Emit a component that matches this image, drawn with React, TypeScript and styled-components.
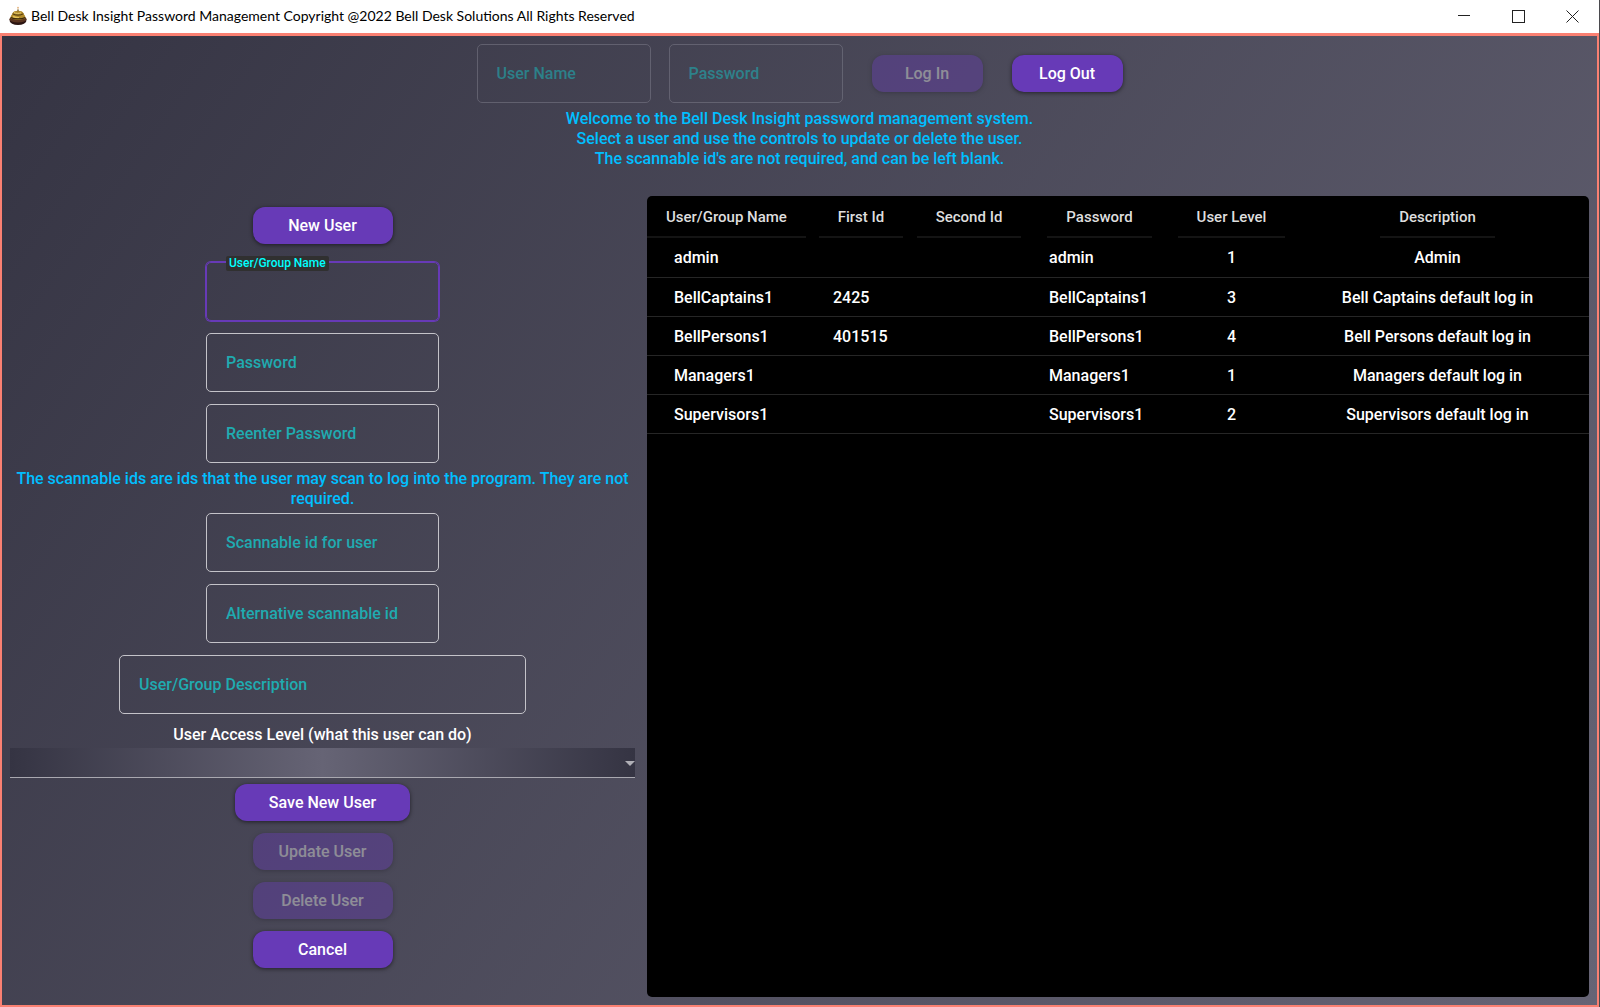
import React, { useState } from "react";
import styled, { createGlobalStyle, css } from "styled-components";

const GlobalStyle = createGlobalStyle`
  *, *::before, *::after { box-sizing: border-box; }
  body {
    margin: 0;
    font-family: Roboto, "Liberation Sans", sans-serif;
    font-size: 16px;
    font-weight: 500;
    line-height: 20px;
    color: #ffffff;
  }
  button, input, select { font: inherit; color: inherit; }
`;

const Window = styled.div`
  min-height: 100vh;
  display: flex;
  flex-direction: column;
  background: #ffffff;
  border-right: 1px solid #4a4a4e;
`;

const TitleBar = styled.header`
  height: 33px;
  display: flex;
  align-items: center;
  padding: 0 0 1px 8px;
  color: #000000;
`;

const Title = styled.h1`
  flex: 1;
  margin: 0 0 0 3px;
  font: 400 14px/20px Lato, "Open Sans", sans-serif;
`;

const Caption = styled.button`
  width: 54px;
  height: 32px;
  padding: 0;
  border: 0;
  background: none;
  display: grid;
  place-items: center;
`;

const Client = styled.main`
  flex: 1;
  display: flex;
  flex-direction: column;
  border: 2px solid #fa8072;
  border-top-width: 3px;
  background: linear-gradient(125deg, #353443, #666475);
`;

const LoginBar = styled.form`
  display: flex;
  justify-content: center;
  align-items: center;
  gap: 29px;
  padding-top: 8px;
`;

const Credentials = styled.div`
  display: flex;
  gap: 18px;
`;

const Notice = styled.p`
  margin: 6px 0 4px;
  color: #00bfff;
  text-align: center;
  white-space: pre-line;
`;

const FieldBox = styled.div<{ $width: number; $disabled?: boolean }>`
  position: relative;
  width: ${(p) => p.$width}px;
  height: 59px;
  display: grid;
  align-items: center;
  opacity: ${(p) => (p.$disabled ? 0.6 : 1)};
`;

const FieldInput = styled.input<{ $active: boolean }>`
  grid-area: 1 / 1;
  width: 100%;
  height: 100%;
  padding: 0 19px;
  border: 1px solid ${(p) => (p.disabled ? "#777684" : "#c4c3c9")};
  border-radius: 5px;
  background: transparent;
  outline: none;
  ${(p) =>
    p.$active &&
    css`
      border-color: #673ab7;
      box-shadow: 0 0 0 1px #673ab7;
    `}
`;

const FieldLabel = styled.label<{ $floating: boolean }>`
  grid-area: 1 / 1;
  margin-left: 20px;
  color: #1fabb0;
  pointer-events: none;
  ${(p) =>
    p.$floating &&
    css`
      position: absolute;
      top: -6px;
      padding: 0 3px;
      border-radius: 2px;
      background: #303030;
      color: #00ffff;
      font-size: 12px;
      line-height: 15px;
    `}
`;

const PushButton = styled.button<{ $width: number }>`
  width: ${(p) => p.$width}px;
  height: 37px;
  padding: 0;
  border: 0;
  border-radius: 12px;
  background: #673ab7;
  color: #ffffff;
  box-shadow: 0 1px 4px rgba(0, 0, 0, 0.55);
  &:disabled { opacity: 0.38; }
`;

const Columns = styled.div`
  flex: 1;
  display: grid;
  grid-template-columns: minmax(0, 2fr) minmax(0, 3fr);
  margin-top: 23px;
`;

const Editor = styled.form`
  display: flex;
  flex-direction: column;
  align-items: center;
  padding: 11px 5px 8px 8px;
`;

const FieldStack = styled.div`
  display: flex;
  flex-direction: column;
  align-items: center;
  gap: 12px;
`;

const FirstStack = styled(FieldStack)`
  margin-top: 18px;
`;

const LevelLabel = styled.label`
  margin: 11px 0 3px;
`;

const LevelBox = styled.div`
  align-self: stretch;
  display: grid;
  align-items: center;
  justify-items: end;
  margin-bottom: 6px;
`;

const LevelSelect = styled.select`
  grid-area: 1 / 1;
  width: 100%;
  height: 30px;
  padding: 0 12px;
  appearance: none;
  border: 0;
  border-bottom: 1px solid #a9a8b0;
  border-radius: 0;
  background: linear-gradient(90deg, #353443, #666475 50%, #353443);
`;

const LevelArrow = styled.svg`
  grid-area: 1 / 1;
  pointer-events: none;
`;

const ListPanel = styled.section`
  margin: 0 8px 8px 7px;
  border-radius: 5px;
  background: #000000;
  overflow: hidden;
`;

const UserTable = styled.table`
  width: 100%;
  table-layout: fixed;
  border-collapse: collapse;
`;

const Column = styled.col<{ $width?: number }>`
  width: ${(p) => (p.$width ? `${p.$width}px` : "auto")};
`;

const Heading = styled.th<{ $align?: string }>`
  height: 42px;
  padding: 0;
  vertical-align: top;
  font-size: 15px;
  font-weight: 500;
  color: #dedede;
  text-align: ${(p) => p.$align ?? "center"};
`;

const HeadingText = styled.span`
  display: inline-block;
  height: 42px;
  padding: 11px 19px 0;
  border-bottom: 2px solid #141414;
`;

const Row = styled.tr`
  border-bottom: 1px solid #262626;
`;

const Cell = styled.td<{ $align?: string; $indent?: number }>`
  height: 39px;
  padding: 2px 0 0 ${(p) => p.$indent ?? 0}px;
  text-align: ${(p) => p.$align ?? "left"};
`;

const DescriptionHeading = styled(Heading)`
  padding-right: 6px;
`;

const DescriptionCell = styled(Cell)`
  padding-right: 6px;
`;

type FieldProps = {
  id: string;
  label: string;
  width?: number;
  disabled?: boolean;
  type?: string;
  active: string;
  onActive: (id: string) => void;
};

function Field({ id, label, width = 233, disabled, type = "text", active, onActive }: FieldProps) {
  const [value, setValue] = useState("");
  const isActive = active === id;
  return (
    <FieldBox $width={width} $disabled={disabled}>
      <FieldInput
        id={id}
        type={type}
        value={value}
        disabled={disabled}
        autoComplete="off"
        $active={isActive}
        onChange={(e) => setValue(e.target.value)}
        onFocus={() => onActive(id)}
      />
      <FieldLabel htmlFor={id} $floating={isActive || value !== ""}>
        {label}
      </FieldLabel>
    </FieldBox>
  );
}

function BellIcon() {
  return (
    <svg width="20" height="20" viewBox="0 0 20 20" aria-hidden="true">
      <ellipse cx="10" cy="14.8" rx="8.400" ry="4.200" fill="#2c1512" />
      <ellipse cx="10" cy="13.200" rx="8.600" ry="3.400" fill="#5a3420" />
      <path d="M2.600 11.800C2.600 9.500 4 9 4.400 7.500C4.800 5.400 7.500 4.800 10 4.800S15.200 5.400 15.600 7.500C16 9 17.400 9.500 17.400 11.800C15.500 14.600 4.500 14.600 2.600 11.800Z" fill="#b18a2a" />
      <path d="M4.600 7.800C7.500 9.600 12.500 9.600 15.400 7.800" stroke="#4f3a10" strokeWidth="1" fill="none" />
      <path d="M2.800 11.400C6 13.400 14 13.400 17.200 11.400" stroke="#3c2a0c" strokeWidth="1.200" fill="none" />
      <path d="M6 6.600C8 7.600 11 7.600 13 6.800" stroke="#e8cf72" strokeWidth="1" fill="none" />
      <path d="M5 10.400C7 11.400 9 11.600 11 11.500" stroke="#e3c258" strokeWidth="1.200" fill="none" />
      <rect x="9.300" y="3.400" width="1.400" height="2" fill="#7d6226" />
      <circle cx="10" cy="1.800" r="1" fill="#e6b98a" />
    </svg>
  );
}

const users = [
  { name: "admin", first: "", second: "", password: "admin", level: 1, description: "Admin" },
  { name: "BellCaptains1", first: "2425", second: "", password: "BellCaptains1", level: 3, description: "Bell Captains default log in" },
  { name: "BellPersons1", first: "401515", second: "", password: "BellPersons1", level: 4, description: "Bell Persons default log in" },
  { name: "Managers1", first: "", second: "", password: "Managers1", level: 1, description: "Managers default log in" },
  { name: "Supervisors1", first: "", second: "", password: "Supervisors1", level: 2, description: "Supervisors default log in" },
];

export default function App() {
  const [active, setActive] = useState("group-name");
  const shared = { active, onActive: setActive };

  return (
    <>
      <GlobalStyle />
      <Window>
        <TitleBar>
          <BellIcon />
          <Title>Bell Desk Insight Password Management Copyright @2022 Bell Desk Solutions All Rights Reserved</Title>
          <Caption type="button" aria-label="Minimize">
            <svg width="12" height="12" viewBox="0 0 12 12"><path d="M0 5.500H12" stroke="#222" /></svg>
          </Caption>
          <Caption type="button" aria-label="Maximize">
            <svg width="13" height="13" viewBox="0 0 13 13"><rect x=".5" y=".5" width="12" height="12" fill="none" stroke="#222" /></svg>
          </Caption>
          <Caption type="button" aria-label="Close">
            <svg width="13" height="13" viewBox="0 0 13 13"><path d="M.5 .5L12.500 12.500M12.500 .5L.5 12.500" stroke="#222" /></svg>
          </Caption>
        </TitleBar>
        <Client>
          <LoginBar onSubmit={(e) => e.preventDefault()}>
            <Credentials>
              <Field id="login-name" label="User Name" width={174} disabled {...shared} />
              <Field id="login-password" label="Password" type="password" width={174} disabled {...shared} />
            </Credentials>
            <PushButton type="submit" $width={111} disabled>Log In</PushButton>
            <PushButton type="button" $width={111}>Log Out</PushButton>
          </LoginBar>
          <Notice>
            {"Welcome to the Bell Desk Insight password management system.\nSelect a user and use the controls to update or delete the user.\nThe scannable id's are not required, and can be left blank."}
          </Notice>
          <Columns>
            <Editor onSubmit={(e) => e.preventDefault()}>
              <PushButton type="button" $width={140}>New User</PushButton>
              <FirstStack>
                <Field id="group-name" label="User/Group Name" {...shared} />
                <Field id="password" label="Password" type="password" {...shared} />
                <Field id="password-again" label="Reenter Password" type="password" {...shared} />
              </FirstStack>
              <Notice>The scannable ids are ids that the user may scan to log into the program. They are not required.</Notice>
              <FieldStack>
                <Field id="scan-id" label="Scannable id for user" {...shared} />
                <Field id="scan-id-alt" label="Alternative scannable id" {...shared} />
                <Field id="description" label="User/Group Description" width={407} {...shared} />
              </FieldStack>
              <LevelLabel htmlFor="level">User Access Level (what this user can do)</LevelLabel>
              <LevelBox>
                <LevelSelect id="level" defaultValue="">
                  <option value="" />
                </LevelSelect>
                <LevelArrow width="10" height="5" viewBox="0 0 10 5" aria-hidden="true">
                  <path d="M0 0H10L5 5Z" fill="#b0afb6" />
                </LevelArrow>
              </LevelBox>
              <FieldStack>
                <PushButton type="submit" $width={175}>Save New User</PushButton>
                <PushButton type="button" $width={140} disabled>Update User</PushButton>
                <PushButton type="button" $width={140} disabled>Delete User</PushButton>
                <PushButton type="button" $width={140}>Cancel</PushButton>
              </FieldStack>
            </Editor>
            <ListPanel>
              <UserTable>
                <colgroup>
                  <Column $width={165} />
                  <Column $width={98} />
                  <Column $width={118} />
                  <Column $width={143} />
                  <Column $width={121} />
                  <Column />
                </colgroup>
                <thead>
                  <tr>
                    <Heading $align="left"><HeadingText>User/Group Name</HeadingText></Heading>
                    <Heading><HeadingText>First Id</HeadingText></Heading>
                    <Heading><HeadingText>Second Id</HeadingText></Heading>
                    <Heading><HeadingText>Password</HeadingText></Heading>
                    <Heading><HeadingText>User Level</HeadingText></Heading>
                    <DescriptionHeading><HeadingText>Description</HeadingText></DescriptionHeading>
                  </tr>
                </thead>
                <tbody>
                  {users.map((u) => (
                    <Row key={u.name}>
                      <Cell $indent={27}>{u.name}</Cell>
                      <Cell $indent={21}>{u.first}</Cell>
                      <Cell $indent={21}>{u.second}</Cell>
                      <Cell $indent={21}>{u.password}</Cell>
                      <Cell $align="center">{u.level}</Cell>
                      <DescriptionCell $align="center">{u.description}</DescriptionCell>
                    </Row>
                  ))}
                </tbody>
              </UserTable>
            </ListPanel>
          </Columns>
        </Client>
      </Window>
    </>
  );
}
